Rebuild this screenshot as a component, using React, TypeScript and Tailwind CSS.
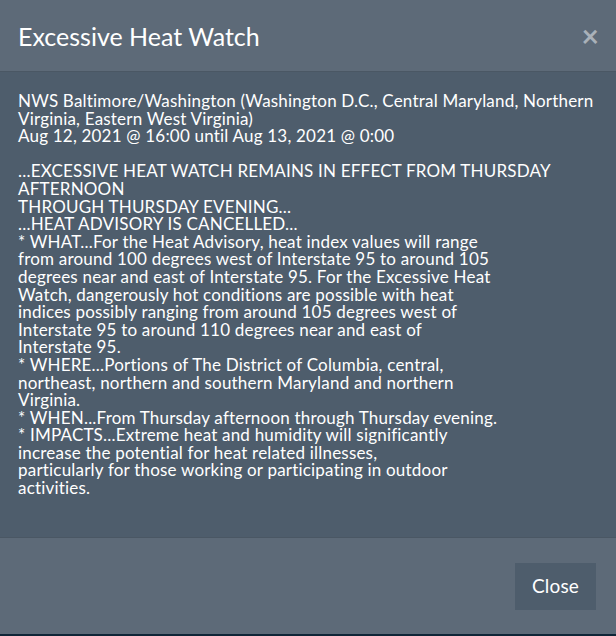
import React from "react";

const text = `NWS Baltimore/Washington (Washington D.C., Central Maryland, Northern Virginia, Eastern West Virginia)
Aug 12, 2021 @ 16:00 until Aug 13, 2021 @ 0:00

...EXCESSIVE HEAT WATCH REMAINS IN EFFECT FROM THURSDAY
AFTERNOON
THROUGH THURSDAY EVENING...
...HEAT ADVISORY IS CANCELLED...
* WHAT...For the Heat Advisory, heat index values will range
from around 100 degrees west of Interstate 95 to around 105
degrees near and east of Interstate 95. For the Excessive Heat
Watch, dangerously hot conditions are possible with heat
indices possibly ranging from around 105 degrees west of
Interstate 95 to around 110 degrees near and east of
Interstate 95.
* WHERE...Portions of The District of Columbia, central,
northeast, northern and southern Maryland and northern
Virginia.
* WHEN...From Thursday afternoon through Thursday evening.
* IMPACTS...Extreme heat and humidity will significantly
increase the potential for heat related illnesses,
particularly for those working or participating in outdoor
activities.`;

export default function App() {
  return (
    <div
      className="w-[616px] h-[636px] bg-[#0f2537] flex flex-col"
      style={{ fontFamily: "Lato, 'Open Sans', sans-serif" }}
    >
      <div className="h-[634px] flex flex-col bg-[#4e5d6c]">
        <div className="h-[72px] shrink-0 bg-[#5d6a78] border-b border-[#4a5764] flex items-center justify-between pl-[18px] pr-[17px]">
          <h4 className="text-[25px] leading-none text-white pt-[1px]">Excessive Heat Watch</h4>
          <span className="text-[30px] leading-none font-bold text-[#a9b1b9] -mt-[2px]">×</span>
        </div>
        <div className="flex-1 px-[18px] pt-[20px] text-[17px] tracking-[0.2px] leading-[17.6px] text-white whitespace-pre-line">
          {text}
        </div>
        <div className="h-[97px] shrink-0 bg-[#5d6a78] border-t border-[#4a5764] flex items-center justify-end pr-[20px]">
          <button className="w-[81px] h-[47px] bg-[#4e5d6c] text-white text-[19px] tracking-[0.2px] flex items-center justify-center">
            Close
          </button>
        </div>
      </div>
    </div>
  );
}
